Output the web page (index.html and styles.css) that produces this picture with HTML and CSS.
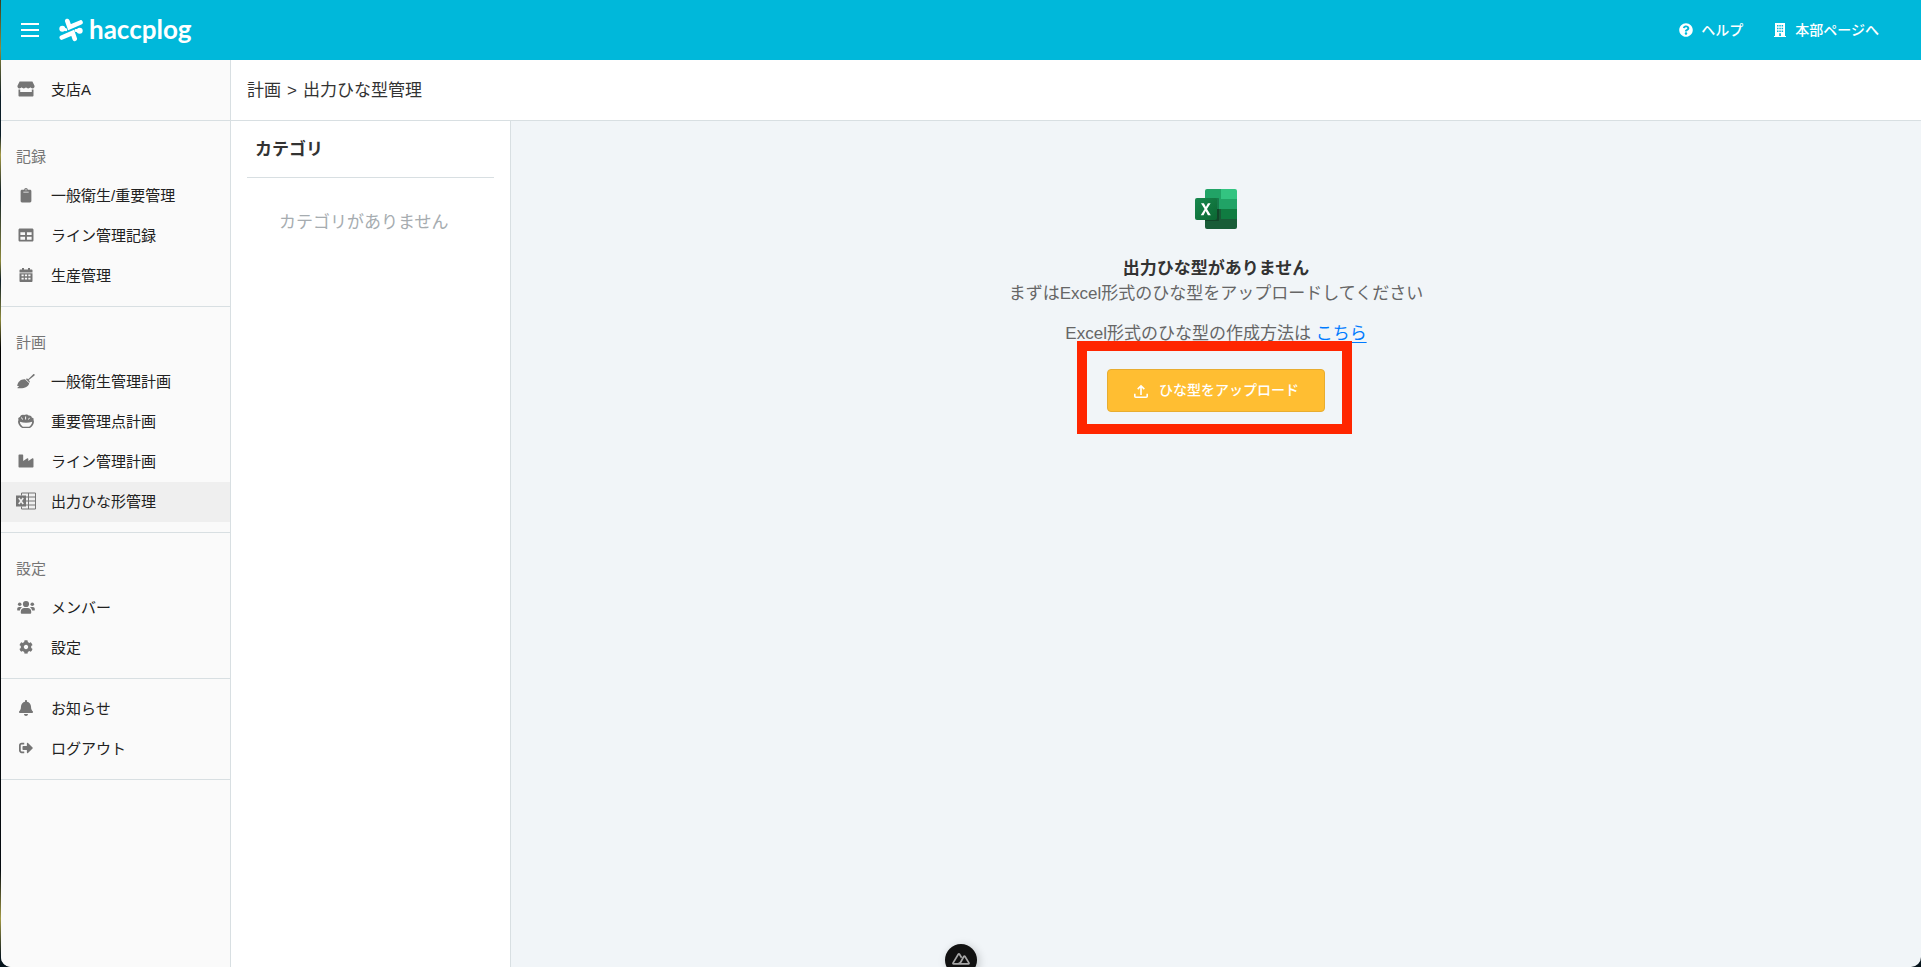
FILE: index.html
```html
<!DOCTYPE html>
<html lang="ja">
<head>
<meta charset="utf-8">
<title>出力ひな型管理 - haccplog</title>
<link rel="stylesheet" href="styles.css">
</head>
<body>
<div class="window">
  <header class="topbar">
    <button class="menu-button" type="button" aria-label="メニュー"><span></span><span></span><span></span></button>
    <a class="logo" href="#">
      <svg class="logo-mark" viewBox="0 0 24 24" fill="none" stroke="#fff" stroke-width="4.6" stroke-linecap="round"><path d="M8.300 3l2.200 6.200L21.500 4.500M2.800 19.500L13.700 14.800l2 6"/><circle cx="3.300" cy="10.700" r="3" fill="#fff" stroke="none"/><circle cx="20.700" cy="12.800" r="3" fill="#fff" stroke="none"/><path d="M3.500 10.800l3.300.8M17 12.400l3.500.4" stroke-width="3"/></svg>
      <span class="logo-text">haccplog</span>
    </a>
    <nav class="top-links">
      <a href="#"><svg class="icon-top" viewBox="0 0 512 512"><path d="M504 256c0 136.997-111.043 248-248 248S8 392.997 8 256C8 119.083 119.043 8 256 8s248 111.083 248 248zM262.655 90c-54.497 0-89.255 22.957-116.549 63.758-3.536 5.286-2.353 12.415 2.715 16.258l34.699 26.310c5.205 3.947 12.621 3.008 16.665-2.122 17.864-22.658 30.113-35.797 57.303-35.797 20.429 0 45.698 13.148 45.698 32.958 0 14.976-12.363 22.667-32.534 33.976C247.128 238.528 216 254.941 216 296v4c0 6.627 5.373 12 12 12h56c6.627 0 12-5.373 12-12v-1.333c0-28.462 83.186-29.647 83.186-106.667 0-58.002-60.165-102-116.531-102zM256 338c-25.365 0-46 20.635-46 46 0 25.364 20.635 46 46 46s46-20.636 46-46c0-25.365-20.635-46-46-46z"/></svg>ヘルプ</a>
      <a href="#"><svg class="icon-top" viewBox="0 0 14 14"><path fill-rule="evenodd" d="M2 0h10v13h1v1H1v-1h1zM4 2v1.500h1.500V2zm2.300 0v1.500h1.500V2zm2.300 0v1.500h1.500V2zM4 4.700v1.500h1.500V4.700zm2.300 0v1.500h1.500V4.700zm2.300 0v1.500h1.500V4.700zM4 7.400v1.500h1.500V7.400zm2.300 0v1.500h1.500V7.400zm2.300 0v1.500h1.500V7.400zM6.200 10.300V13h1.700v-2.700z"/></svg>本部ページへ</a>
    </nav>
  </header>
  <div class="body">
    <aside class="sidebar">
      <a class="branch" href="#"><svg class="icon" viewBox="0 0 20 20"><path d="M3.600 2.500h12.800l2.100 4.300c.4 1.500-.6 2.600-1.900 2.600-1 0-1.700-.6-2.200-1.200-.5.700-1.300 1.200-2.200 1.200s-1.700-.5-2.200-1.200c-.5.700-1.300 1.200-2.200 1.200S6.100 8.900 5.600 8.200c-.5.600-1.200 1.200-2.200 1.200-1.300 0-2.300-1.100-1.900-2.600z"/><path d="M2.500 10.400h1.700V13h11.600v-2.600h1.700v6.200c0 .6-.5 1-1 1h-13c-.5 0-1-.4-1-1z"/></svg>支店A</a>
      <section>
        <h2>記録</h2>
        <ul>
          <li><a href="#"><svg class="icon" viewBox="-165 -110 714 714"><path d="M384 112v352c0 26.510-21.490 48-48 48H48c-26.510 0-48-21.490-48-48V112c0-26.510 21.490-48 48-48h80c0-35.290 28.710-64 64-64s64 28.710 64 64h80c26.510 0 48 21.490 48 48zM192 40c-13.255 0-24 10.745-24 24s10.745 24 24 24 24-10.745 24-24-10.745-24-24-24m96 114v-20a6 6 0 0 0-6-6H102a6 6 0 0 0-6 6v20a6 6 0 0 0 6 6h180a6 6 0 0 0 6-6z"/></svg>一般衛生/重要管理</a></li>
          <li><a href="#"><svg class="icon" viewBox="-86 -86 684 684"><path d="M464 32H48C21.490 32 0 53.490 0 80v352c0 26.510 21.490 48 48 48h416c26.510 0 48-21.490 48-48V80c0-26.510-21.490-48-48-48zM224 416H64v-96h160v96zm0-160H64v-96h160v96zm224 160H288v-96h160v96zm0-160H288v-96h160v96z"/></svg>ライン管理記録</a></li>
          <li><a href="#"><svg class="icon" viewBox="0 0 20 20"><path fill-rule="evenodd" d="M6 3h2v1.600h4V3h2v1.600h1.500c.5 0 1 .4 1 1V7.500h-13V5.600c0-.6.500-1 1-1H6zM3.500 8.300h13V16c0 .6-.5 1-1 1h-11c-.5 0-1-.4-1-1zm2 1.200v1.700h2.200V9.500zm3.400 0v1.700h2.200V9.500zm3.400 0v1.700h2.200V9.500zm-6.800 3.300v1.700h2.200v-1.700zm3.400 0v1.700h2.200v-1.700zm3.400 0v1.700h2.200v-1.700z"/></svg>生産管理</a></li>
        </ul>
      </section>
      <section>
        <h2>計画</h2>
        <ul>
          <li><a href="#"><svg class="icon" viewBox="0 0 20 20"><path d="M18.400 3.200c.5.600.3 1.200-.2 1.600l-5.400 4.300 1 1.300c.3.500 0 1-.5 1L10 8.300c0-.7.600-1 1.200-.7l1 .7L17 3.400c.5-.4 1-.6 1.400-.2zM9.200 8.400l4 3.800c-.8 3.300-4 5-8.700 5-1.500 0-2.500 0-3.300-.3l2-1.800-2-.2c.6-3.900 3.500-6.900 8-6.500z"/></svg>一般衛生管理計画</a></li>
          <li><a href="#"><svg class="icon" viewBox="0 0 20 20"><path fill-rule="evenodd" d="M2.800 9.200C1.500 8 2.300 6.300 4 6c.5-1.800 2.500-2.600 4-1.900 1.500-1.200 4-.8 4.700.4 1.600-.3 3 .6 3.100 1.900 1.900.2 2.400 1.800 1.400 2.800h.6c.7 3-1 6-3.800 7.800H6.200C3.300 15.200 1.500 12.200 2.200 9.200zm1.100 1.600c.1 2 1.200 3.600 2.900 4.900h6.400c1.700-1.200 2.800-3 3-4.900-4 1.300-8.400 1.300-12.300 0z"/><path d="M5.500 6.500l1 2M9.600 5.500v3M13.500 6.800l-1 1.700" stroke="#fafafa" stroke-width="1"/></svg>重要管理点計画</a></li>
          <li><a href="#"><svg class="icon" viewBox="-86 -86 684 684"><path d="M475.115 163.781L336 252.309v-68.280c0-18.916-20.931-30.399-36.885-20.248L160 252.309V56c0-13.255-10.745-24-24-24H24C10.745 32 0 42.745 0 56v400c0 13.255 10.745 24 24 24h464c13.255 0 24-10.745 24-24V184.029c0-18.917-20.931-30.399-36.885-20.248z"/></svg>ライン管理計画</a></li>
          <li class="active"><a href="#"><svg class="icon" viewBox="0 0 20 20"><path d="M5.500 4.500V2h14v16h-14v-2.500M5.500 6h14M9 10h10.500M9 14h10.500M12.500 2v16" fill="none" stroke="#757575"/><rect x="0" y="4.500" width="10" height="11"/><path d="M2.800 7l4.400 6M7.200 7l-4.400 6" stroke="#efefef" stroke-width="1.600"/></svg>出力ひな形管理</a></li>
        </ul>
      </section>
      <section>
        <h2>設定</h2>
        <ul>
          <li><a href="#"><svg class="icon" viewBox="0 0 20 20"><circle cx="10" cy="7" r="3.100"/><circle cx="3.700" cy="7.300" r="1.800"/><circle cx="16.300" cy="7.300" r="1.800"/><path d="M4.800 16v-1.400c0-2 1.500-3.500 3.500-3.500h3.400c2 0 3.500 1.500 3.500 3.500V16c0 .5-.4.800-.8.800H5.600c-.4 0-.8-.3-.8-.8zM1.200 13v-1.200c0-1 .8-1.900 1.900-1.900h1.600c.6 0 1 .2 1.400.5C4.700 11.100 4 12.200 3.900 13.600H1.800c-.3 0-.6-.3-.6-.6zM18.800 13v-1.200c0-1-.8-1.900-1.900-1.900h-1.600c-.6 0-1 .2-1.400.5 1.400.7 2.100 1.800 2.200 3.200h2.100c.3 0 .6-.3.600-.6z"/></svg>メンバー</a></li>
          <li><a href="#"><svg class="icon" viewBox="-110 -110 732 732"><path d="M487.400 315.700l-42.600-24.600c4.300-23.200 4.300-47 0-70.200l42.600-24.600c4.900-2.800 7.100-8.600 5.500-14-11.100-35.600-30-67.800-54.700-94.600-3.800-4.100-10-5.100-14.800-2.300L380.800 110c-17.900-15.400-38.500-27.300-60.800-35.100V25.800c0-5.600-3.900-10.500-9.400-11.700-36.700-8.200-74.300-7.800-109.200 0-5.500 1.200-9.400 6.100-9.400 11.700V75c-22.200 7.900-42.800 19.800-60.800 35.100L88.700 85.500c-4.900-2.800-11-1.900-14.800 2.300-24.700 26.700-43.600 58.900-54.700 94.600-1.700 5.400.6 11.200 5.500 14L67.300 221c-4.300 23.200-4.300 47 0 70.200l-42.600 24.600c-4.900 2.800-7.100 8.600-5.500 14 11.100 35.600 30 67.800 54.700 94.600 3.800 4.100 10 5.100 14.800 2.300l42.600-24.600c17.900 15.400 38.500 27.300 60.800 35.100v49.200c0 5.600 3.900 10.500 9.400 11.700 36.700 8.200 74.300 7.800 109.200 0 5.500-1.200 9.400-6.100 9.400-11.700v-49.200c22.200-7.900 42.800-19.800 60.800-35.100l42.600 24.600c4.900 2.800 11 1.900 14.800-2.300 24.700-26.700 43.600-58.900 54.700-94.600 1.500-5.500-.7-11.300-5.600-14.100zM256 336c-44.100 0-80-35.900-80-80s35.900-80 80-80 80 35.900 80 80-35.900 80-80 80z"/></svg>設定</a></li>
        </ul>
      </section>
      <section>
        <ul>
          <li><a href="#"><svg class="icon" viewBox="-96 -64 640 640"><path d="M224 512c35.320 0 63.970-28.650 63.970-64H160.030c0 35.350 28.650 64 63.970 64zm215.390-149.710c-19.320-20.760-55.470-51.990-55.470-154.290 0-77.700-54.480-139.900-127.940-155.160V32c0-17.670-14.320-32-31.980-32s-31.980 14.330-31.980 32v20.840C118.560 68.100 64.080 130.300 64.080 208c0 102.300-36.150 133.530-55.470 154.290-6 6.450-8.660 14.160-8.610 21.710.11 16.400 12.980 32 32.100 32h383.800c19.120 0 32-15.600 32.100-32 .05-7.550-2.610-15.270-8.610-21.710z"/></svg>お知らせ</a></li>
          <li><a href="#"><svg class="icon" viewBox="-110 -110 732 732"><path d="M497 273L329 441c-15 15-41 4.500-41-17v-96H152c-13.300 0-24-10.700-24-24v-96c0-13.300 10.700-24 24-24h136V88c0-21.400 25.900-32 41-17l168 168c9.300 9.400 9.300 24.600 0 34zM192 436v-40c0-6.600-5.400-12-12-12H96c-17.700 0-32-14.300-32-32V160c0-17.700 14.300-32 32-32h84c6.600 0 12-5.400 12-12V76c0-6.600-5.400-12-12-12H96c-53 0-96 43-96 96v192c0 53 43 96 96 96h84c6.600 0 12-5.400 12-12z"/></svg>ログアウト</a></li>
        </ul>
      </section>
    </aside>
    <div class="page">
      <div class="breadcrumb"><span>計画</span><span>&gt;</span><span>出力ひな型管理</span></div>
      <div class="columns">
        <section class="categories">
          <h2>カテゴリ</h2>
          <p>カテゴリがありません</p>
        </section>
        <main class="empty">
          <svg class="excel" viewBox="0 0 42 40">
            <defs><linearGradient id="tile" x1="0" y1="0" x2="1" y2="1"><stop offset="0" stop-color="#18884f"/><stop offset="1" stop-color="#0b6631"/></linearGradient><clipPath id="sheet"><rect x="10" y="0" width="32" height="40" rx="2"/></clipPath></defs>
            <g clip-path="url(#sheet)"><path fill="#21a366" d="M10 0h16v20H10zM26 10h16v10H26z"/><path fill="#33c481" d="M26 0h16v10H26z"/><path fill="#107c41" d="M26 20h16v10H26z"/><path fill="#185c37" d="M10 20h16v10h16v10H10z"/><path d="M10 9h13c.600 0 1 .400 1 1v21c0 .600-.400 1-1 1H10z" opacity=".25"/></g>
            <rect y="9" width="22" height="22" rx="2" fill="url(#tile)"/>
            <path fill="#fff" d="M5.700 26.200l3.900-6.100L6 14.200h2.900l2 3.900 2-3.900h2.700L12 20.100l3.800 6.100h-2.900l-2.200-4.200-2.200 4.200z"/>
          </svg>
          <h1>出力ひな型がありません</h1>
          <p>まずはExcel形式のひな型をアップロードしてください</p>
          <p class="guide">Excel形式のひな型の作成方法は <a href="#">こちら</a></p>
          <div class="upload">
            <button class="upload-button" type="button"><svg viewBox="0 0 14 14" fill="none" stroke="#fff" stroke-width="1.600"><path d="M7 11V2M3.700 5.100L7 1.800l3.300 3.300M.8 9.700v2.500c0 .6.400 1 1 1h10.400c.6 0 1-.4 1-1V9.700"/></svg><span>ひな型をアップロード</span></button>
            <span class="highlight"></span>
          </div>
        </main>
      </div>
    </div>
  </div>
  <button class="devtools" type="button" aria-label="Nuxt DevTools"><svg viewBox="0 0 18 12" fill="none" stroke="#a6a6a6" stroke-width="1.700" stroke-linejoin="round"><path d="M9 10.900H1.600c-.6 0-.8-.5-.5-1L6.300 1.300c.3-.5.900-.5 1.200 0L9.600 4.800M8.800 10.900h7.600c.6 0 .8-.5.500-1L13 3.500c-.3-.5-.9-.5-1.200 0L8.800 9c-.8 1.400-1.500 1.900-3 1.900"/></svg></button>
</div>
</body>
</html>
```
FILE: styles.css
```css
* {
  box-sizing: border-box;
}

body {
  margin: 0;
  padding-left: 1px;
  background: linear-gradient(#3a3d20, #8d8a3c 5%, #0a1c26 10%, #0a1c26 14%, #a39a45 16%, #0a1c26 20%, #8d8a3c 27%, #0a1c26 29%, #8d8a3c 33%, #000 36%, #050b10 90%, #a39a45 95%, #06141c 99%);
  color: #333;
  font: 17px/25px "Liberation Sans", "Noto Sans CJK JP", sans-serif;
}

.window {
  display: flex;
  flex-direction: column;
  min-height: 100vh;
  overflow: hidden;
  border-radius: 0 0 10px 10px;
  background: #f1f5f8;
}

a {
  color: inherit;
  text-decoration: none;
}

h1, h2, p, ul {
  margin: 0;
  padding: 0;
  font-size: inherit;
}

ul {
  list-style: none;
}

.topbar {
  display: flex;
  align-items: center;
  height: 60px;
  padding: 0 42px 0 20px;
  background: #00b8da;
  color: #fff;
}

.menu-button {
  display: flex;
  flex-direction: column;
  gap: 4px;
  width: 18px;
  padding: 0;
  border: 0;
  background: none;
}

.menu-button span {
  height: 2px;
  background: #fff;
}

.logo {
  display: flex;
  align-items: center;
  gap: 6px;
  margin-left: 20px;
}

.logo-mark {
  width: 24px;
  height: 24px;
}

.logo-text {
  padding-bottom: 2px;
  font: 700 26px/30px Lato, sans-serif;
}

.top-links {
  display: flex;
  gap: 30px;
  margin-left: auto;
  font-size: 14px;
  font-weight: 500;
}

.top-links a {
  display: flex;
  align-items: center;
  gap: 8px;
}

.icon-top {
  width: 14px;
  height: 14px;
  fill: #fff;
}

.body {
  display: flex;
  flex: 1;
}

.sidebar {
  flex: none;
  width: 230px;
  border-right: 1px solid #d8dfe2;
  background: #fafafa;
  color: #212121;
  font-size: 15px;
}

.sidebar section {
  padding-bottom: 10px;
  border-bottom: 1px solid #d8dfe2;
}

.sidebar section:last-child {
  padding-top: 10px;
}

.sidebar h2 {
  padding: 21px 15px 4px;
  color: #757575;
  font-weight: 400;
  line-height: 30px;
}

.sidebar a {
  display: flex;
  align-items: center;
  gap: 15px;
  height: 40px;
  padding: 0 15px 2px;
}

.sidebar .branch {
  height: 61px;
  border-bottom: 1px solid #d8dfe2;
}

.sidebar .active {
  background: #efefef;
}

.icon {
  flex: none;
  width: 20px;
  height: 20px;
  fill: #757575;
}

.page {
  display: flex;
  flex: 1;
  flex-direction: column;
}

.breadcrumb {
  display: flex;
  gap: 6px;
  padding: 18px 16px 17px;
  border-bottom: 1px solid #d8dfe2;
  background: #fff;
}

.columns {
  display: flex;
  flex: 1;
}

.categories {
  flex: none;
  width: 280px;
  padding: 0 16px;
  border-right: 1px solid #d8dfe2;
  background: #fff;
}

.categories h2 {
  padding: 16px 8px 15px;
  border-bottom: 1px solid #d8dfe2;
}

.categories p {
  padding: 32px;
  color: #a6acb0;
}

.empty {
  display: flex;
  flex: 1;
  flex-direction: column;
  align-items: center;
  padding-top: 68px;
  color: #666;
}

.excel {
  width: 42px;
  height: 40px;
  margin-bottom: 27px;
}

.empty h1 {
  color: #333;
}

.guide {
  margin-top: 15px;
}

.guide a {
  color: #007bff;
  text-decoration: underline;
  text-underline-offset: 3px;
}

.upload {
  position: relative;
  margin-top: 23px;
}

.upload-button {
  display: flex;
  align-items: center;
  gap: 11px;
  height: 43px;
  padding: 0 25px 0 26px;
  border: 1px solid #e8ad30;
  border-radius: 4px;
  background: #ffbe32;
  color: #fff;
  font: 500 14px/20px "Liberation Sans", "Noto Sans CJK JP", sans-serif;
}

.upload-button span {
  padding-bottom: 2px;
}

.upload-button svg {
  width: 14px;
  height: 14px;
}

.highlight {
  position: absolute;
  inset: -28px -27px -22px -30px;
  border: 10px solid #ff2600;
  pointer-events: none;
}

.devtools {
  position: fixed;
  bottom: -9px;
  left: 50%;
  display: flex;
  justify-content: center;
  width: 32px;
  height: 32px;
  margin-left: -16px;
  padding: 9px 0 0;
  border: 0;
  border-radius: 50%;
  background: #111;
  box-shadow: 2px 2px 10px rgb(0 0 0 / 20%);
}

.devtools svg {
  flex: none;
  width: 18px;
  height: 12px;
}
```
